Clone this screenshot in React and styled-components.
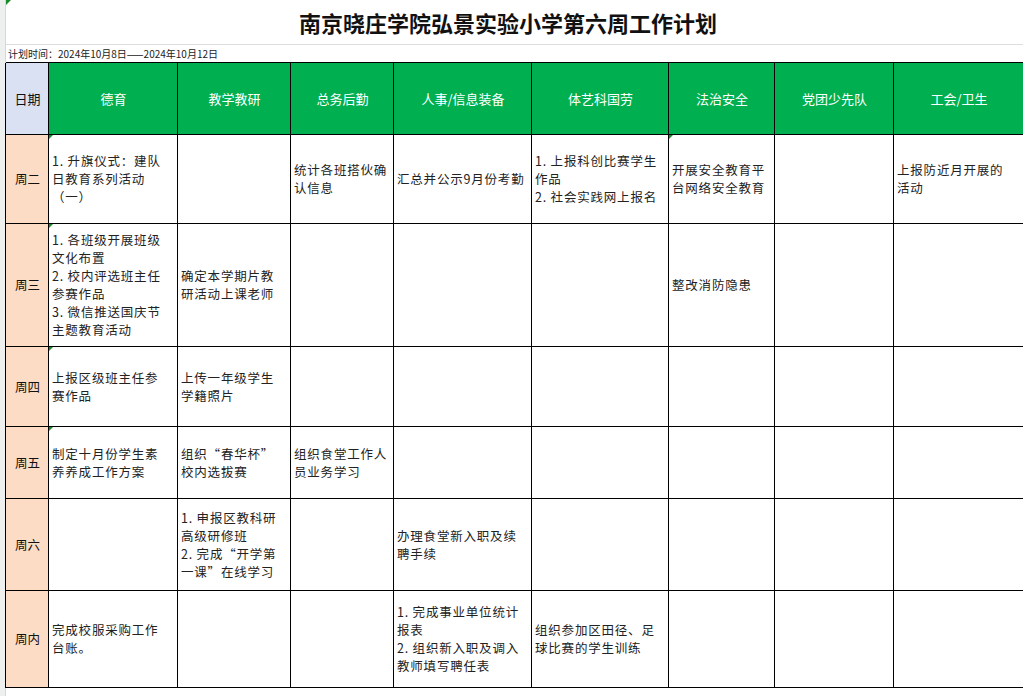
import React from "react";
import styled, { createGlobalStyle } from "styled-components";

const G = createGlobalStyle`
  html,body{margin:0;padding:0;background:#fff;}
  body{font-family:"Noto Sans CJK SC","Liberation Sans",sans-serif;color:#222;}
`;
const Page = styled.div`
  width:1023px;height:696px;overflow:hidden;display:flex;background:#fff;
`;
const Strip = styled.div`width:5px;background:#eef0f0;border-right:1px solid #d8d8d8;flex:none;`;
const Main = styled.div`flex:1;display:flex;flex-direction:column;`;
const Title = styled.div`
  position:relative;height:44px;border-bottom:1px solid #ddd;display:flex;align-items:center;justify-content:center;
  font-size:22px;font-weight:700;color:#111;padding-right:14px;
  &::before{content:"";position:absolute;left:0;top:0;border-top:5px solid #1a8a2a;border-right:5px solid transparent;}
`;
const DateLine = styled.div`height:17px;font-size:10px;line-height:17px;padding-left:2px;border-bottom:1px solid #000;color:#222;`;
const Grid = styled.div`
  display:grid;
  grid-template-columns:43px 129px 113px 103px 138px 137px 106px 119px 130px;
  grid-template-rows:72px 89px 123px 80px 72px 92px 97px;
  border-left:1px solid #000;margin-left:-1px;
`;
const Cell = styled.div`
  position:relative;box-sizing:border-box;border-right:1px solid #000;border-bottom:1px solid #000;
  display:flex;align-items:center;padding:0 2px 0 3px;font-size:12.5px;line-height:18px;white-space:pre-line;
  letter-spacing:${p=>p.$center?"0":"0.8px"};
  background:${p=>p.$bg||"#fff"};color:${p=>p.$c||"#222"};
  justify-content:${p=>p.$center?"center":"flex-start"};
  ${p=>p.$mark?`&::before{content:"";position:absolute;left:0;top:0;border-top:4px solid #1a8a2a;border-right:4px solid transparent;}`:""}
`;

const heads=["德育","教学教研","总务后勤","人事/信息装备","体艺科国劳","法治安全","党团少先队","工会/卫生"];
const rows=[
  ["周二",["1. 升旗仪式：建队\n日教育系列活动\n（一）","","统计各班搭伙确\n认信息","汇总并公示9月份考勤","1. 上报科创比赛学生\n作品\n2. 社会实践网上报名","开展安全教育平\n台网络安全教育","","上报防近月开展的\n活动"]],
  ["周三",["1. 各班级开展班级\n文化布置\n2. 校内评选班主任\n参赛作品\n3. 微信推送国庆节\n主题教育活动","确定本学期片教\n研活动上课老师","","","","整改消防隐患","",""]],
  ["周四",["上报区级班主任参\n赛作品","上传一年级学生\n学籍照片","","","","","",""]],
  ["周五",["制定十月份学生素\n养养成工作方案","组织“春华杯”\n校内选拔赛","组织食堂工作人\n员业务学习","","","","",""]],
  ["周六",["","1. 申报区教科研\n高级研修班\n2. 完成“开学第\n一课”在线学习","","办理食堂新入职及续\n聘手续","","","",""]],
  ["周内",["完成校服采购工作\n台账。","","","1. 完成事业单位统计\n报表\n2. 组织新入职及调入\n教师填写聘任表","组织参加区田径、足\n球比赛的学生训练","","",""]],
];
const marks={"0-1":1,"0-6":1,"1-1":1,"2-1":1,"3-1":1};

export default function App(){
  return(<Page><G/><Strip/><Main>
    <Title>南京晓庄学院弘景实验小学第六周工作计划</Title>
    <DateLine>计划时间：2024年10月8日——2024年10月12日</DateLine>
    <Grid>
      <Cell $bg="#d9e1f2" $center $c="#111" style={{fontSize:13}}>日期</Cell>
      {heads.map(h=><Cell key={h} $bg="#00b050" $c="#fff" $center style={{fontSize:13}}>{h}</Cell>)}
      {rows.map(([d,cs],ri)=>(
        <React.Fragment key={d}>
          <Cell $bg="#fcdcc4" $center $c="#111">{d}</Cell>
          {cs.map((t,ci)=><Cell key={ci} $mark={marks[`${ri}-${ci+1}`]}>{t}</Cell>)}
        </React.Fragment>
      ))}
    </Grid>
  </Main></Page>);
}
